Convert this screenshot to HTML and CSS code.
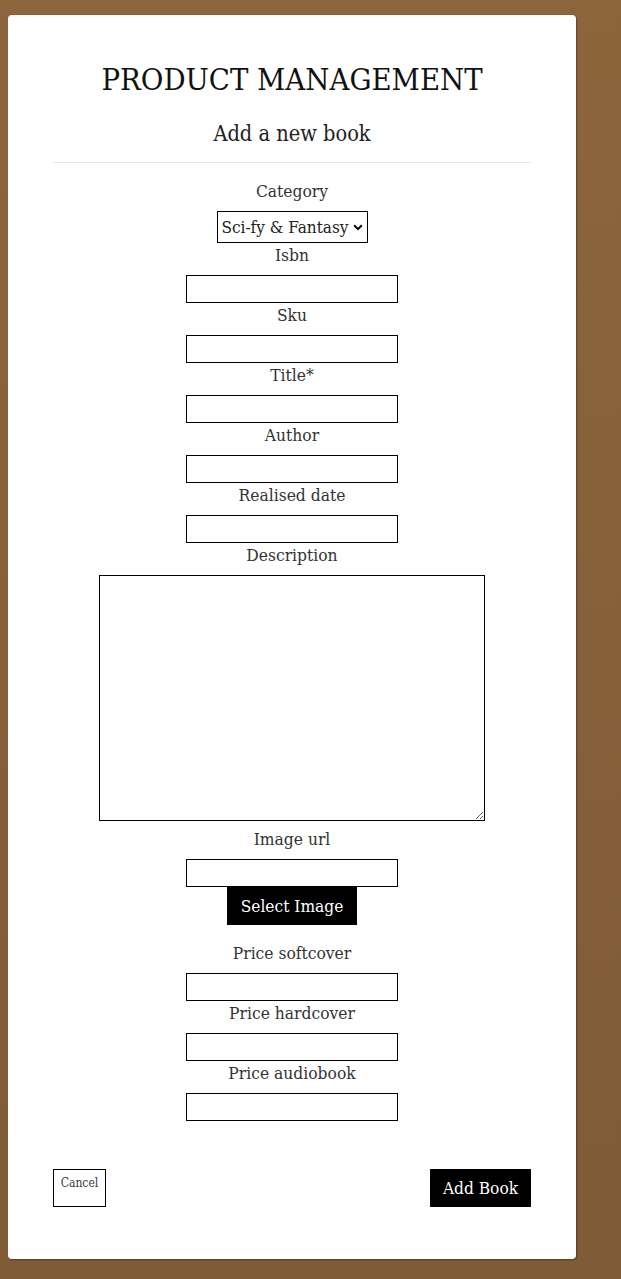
FILE: index.html
```html
<!DOCTYPE html>
<html lang="en">
<head>
<meta charset="utf-8">
<title>Product Management</title>
<link rel="stylesheet" href="styles.css">
</head>
<body>
<main class="card">
  <h1 class="title">PRODUCT MANAGEMENT</h1>
  <h2 class="subtitle">Add a new book</h2>
  <hr class="divider">
  <form class="form">
    <label class="label" for="category">Category</label>
    <span class="select-wrap">
      <select id="category" class="select">
        <option>Sci-fy &amp; Fantasy</option>
      </select>
      <svg class="chevron" width="10" height="7" viewBox="0 0 10 7" aria-hidden="true"><path d="M1.2 1.3 L5 5.1 L8.8 1.3" fill="none" stroke="#000" stroke-width="2"/></svg>
    </span>
    <label class="label" for="isbn">Isbn</label>
    <input id="isbn" class="input" type="text">
    <label class="label" for="sku">Sku</label>
    <input id="sku" class="input" type="text">
    <label class="label" for="title">Title*</label>
    <input id="title" class="input" type="text">
    <label class="label" for="author">Author</label>
    <input id="author" class="input" type="text">
    <label class="label" for="date">Realised date</label>
    <input id="date" class="input" type="text">
    <label class="label" for="desc">Description</label>
    <textarea id="desc" class="textarea"></textarea>
    <label class="label" for="img">Image url</label>
    <input id="img" class="input" type="text">
    <button type="button" class="btn-dark btn-select">Select Image</button>
    <label class="label" for="soft">Price softcover</label>
    <input id="soft" class="input" type="text">
    <label class="label" for="hard">Price hardcover</label>
    <input id="hard" class="input" type="text">
    <label class="label" for="audio">Price audiobook</label>
    <input id="audio" class="input" type="text">
    <div class="actions">
      <button type="button" class="btn-cancel">Cancel</button>
      <button type="submit" class="btn-dark btn-add">Add Book</button>
    </div>
  </form>
</main>
</body>
</html>
```
FILE: styles.css
```css
html, body {
  margin: 0;
  padding: 0;
}
body {
  background: linear-gradient(#8c653d, #7f5b36);
  min-height: 1279px;
  padding: 15px 45px 20px 8px;
  box-sizing: border-box;
  font-family: "DejaVu Serif", serif;
  font-stretch: condensed;
  color: #222;
}
.card {
  width: 568px;
  height: 1244px;
  box-sizing: border-box;
  background: #fff;
  border-radius: 4px;
  box-shadow: 1px 1px 2px rgba(0,0,0,0.35);
  padding: 0 45px;
  text-align: center;
}
.title {
  margin: 0;
  padding-top: 45px;
  font-size: 30.7px;
  line-height: 40px;
  font-weight: normal;
  color: #111;
}
.subtitle {
  margin: 20px 0 0;
  font-size: 21.6px;
  line-height: 28px;
  font-weight: normal;
  color: #222;
}
.divider {
  margin: 14px 0 0;
  border: 0;
  border-top: 1px solid #e4e4e4;
  height: 0;
}
.form {
  display: flex;
  flex-direction: column;
  align-items: center;
  padding-top: 16px;
}
.label {
  display: block;
  font-size: 17.3px;
  line-height: 24px;
  margin-bottom: 8px;
  color: #333;
}
.select-wrap {
  position: relative;
  display: block;
  width: 151px;
  height: 32px;
}
.select {
  appearance: none;
  -webkit-appearance: none;
  width: 151px;
  height: 32px;
  box-sizing: border-box;
  border: 1px solid #000;
  border-radius: 0;
  background: #fff;
  font-family: inherit;
  font-stretch: inherit;
  font-size: 17px;
  color: #222;
  padding: 0 14px 0 4px;
  margin: 0;
}
.chevron {
  position: absolute;
  right: 5px;
  top: 13px;
  pointer-events: none;
}
.input {
  width: 212px;
  height: 28px;
  box-sizing: border-box;
  border: 1px solid #000;
  border-radius: 0;
  padding: 0 4px;
  margin: 0;
  font-family: inherit;
}
.textarea {
  width: 386px;
  height: 246px;
  box-sizing: border-box;
  border: 1px solid #000;
  border-radius: 0;
  margin: 0 0 6px;
  font-family: inherit;
}
.btn-dark {
  background: #000;
  color: #fff;
  border: 0;
  border-radius: 0;
  height: 38px;
  font-family: inherit;
  font-stretch: inherit;
  font-size: 17.2px;
  padding: 0;
  cursor: pointer;
}
.btn-select {
  width: 130px;
  margin-bottom: 16px;
}
.actions {
  align-self: stretch;
  display: flex;
  justify-content: space-between;
  align-items: flex-start;
  margin-top: 48px;
}
.btn-cancel {
  width: 53px;
  height: 38px;
  box-sizing: border-box;
  border: 1px solid #000;
  border-radius: 0;
  background: #fff;
  color: #2f3a48;
  font-family: inherit;
  font-stretch: inherit;
  font-size: 12px;
  padding: 6px 0 0;
  display: flex;
  justify-content: center;
  align-items: flex-start;
}
.btn-add {
  width: 101px;
}
```
